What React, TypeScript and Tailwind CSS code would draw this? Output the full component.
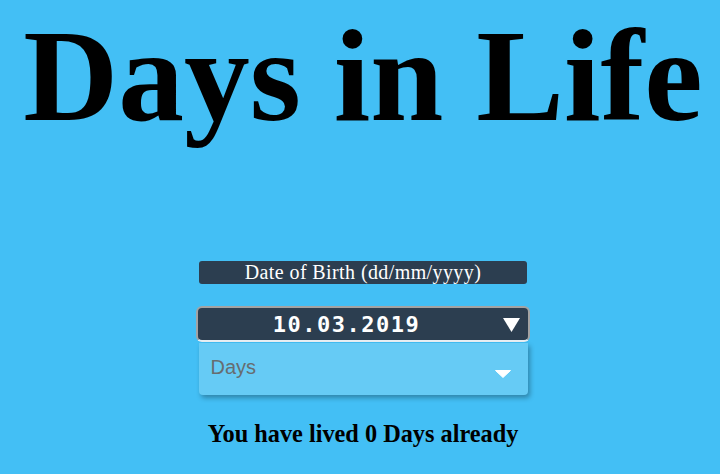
import React from 'react';

export default function App() {
  return (
    <div className="min-h-[474px] w-full bg-[#43bff5] flex flex-col items-center overflow-hidden pl-[6px]">
      {/* title */}
      <h1 className="pt-[11px] text-[131.5px] leading-[130px] font-bold text-black font-['Liberation_Serif','Times_New_Roman',serif] whitespace-nowrap">
        Days in Life
      </h1>

      {/* label */}
      <div className="mt-[120px] w-[328px] h-[23px] rounded-[3px] bg-[#2c3e50] text-white text-center text-[20px] leading-[23px] tracking-[0.4px] font-['Liberation_Serif','Times_New_Roman',serif] whitespace-nowrap">
        Date of Birth (dd/mm/yyyy)
      </div>

      {/* date input */}
      <div className="mt-[22px] w-[334px] h-[36px] rounded-[6px] border-2 border-[#a3a3a3] border-b-[#e8eef2] bg-[#2c3e50] flex items-center">
        <span className="flex-1 pr-[8px] text-center text-white text-[22px] font-bold tracking-[1.5px] font-['DejaVu_Sans_Mono','Liberation_Mono',monospace]">
          10.03.2019
        </span>
        <svg width="17" height="14" viewBox="0 0 17 14" className="mr-[8px] mt-[2px]">
          <path d="M0 0 H17 L8.5 14 Z" fill="#ffffff" />
        </svg>
      </div>

      {/* unit select */}
      <div className="mt-[1px] w-[329px] h-[52px] rounded-b-[4px] bg-[#66cbf5] shadow-[2px_3px_5px_rgba(0,0,0,0.3)] flex items-center pl-[12px] pr-[17px]">
        <span className="flex-1 text-[20px] text-[#676d70] font-['Liberation_Sans',Arial,sans-serif] -mt-[4px]">
          Days
        </span>
        <svg width="16" height="8" viewBox="0 0 16 8" className="mt-[10px]">
          <path d="M0.5 0.5 H15.5 L8 7.5 Z" fill="#ffffff" stroke="#ffffff" strokeLinejoin="round" />
        </svg>
      </div>

      {/* result */}
      <p className="mt-[25px] text-[24.3px] leading-[28px] font-bold text-black font-['Liberation_Serif','Times_New_Roman',serif] whitespace-nowrap">
        You have lived 0 Days already
      </p>
    </div>
  );
}
